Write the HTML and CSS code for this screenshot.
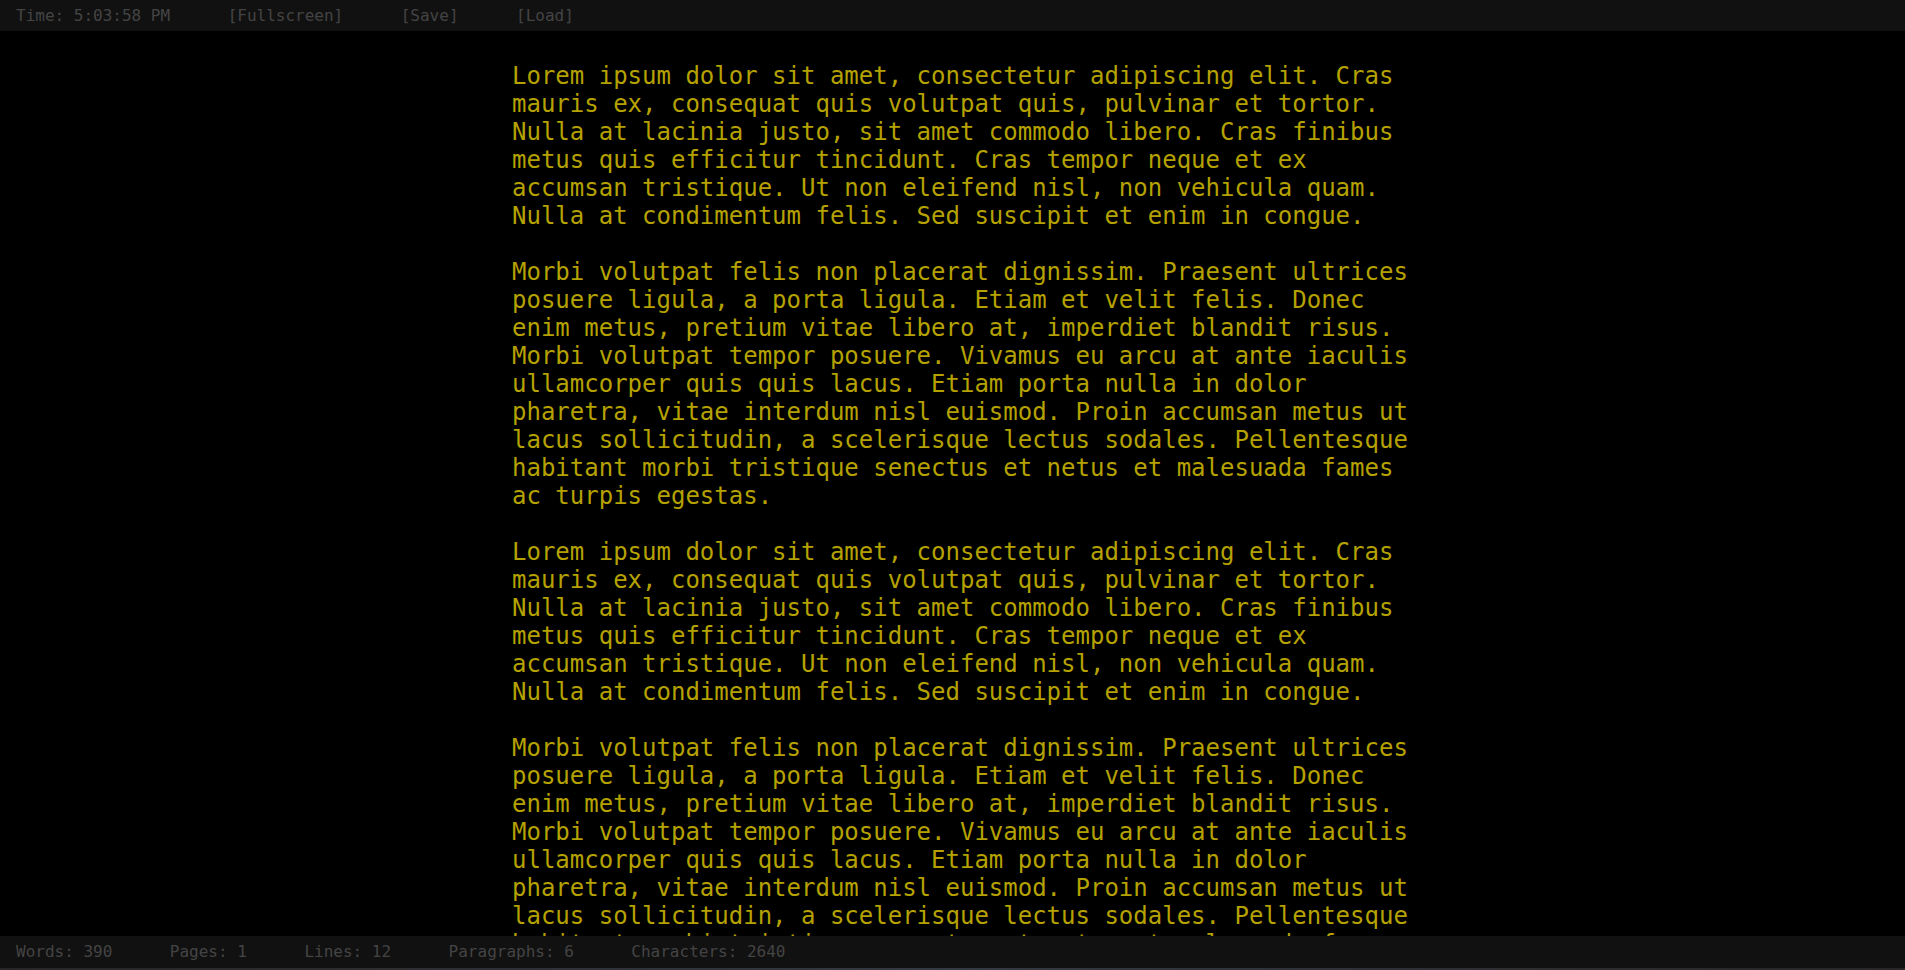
FILE: index.html
```html
<!DOCTYPE html>
<html>
<head>
<meta charset="utf-8">
<link rel="stylesheet" href="styles.css">
</head>
<body>
<div class="app">
  <header class="bar top">
    <span class="item">Time: 5:03:58 PM</span>
    <span class="item">[Fullscreen]</span>
    <span class="item">[Save]</span>
    <span class="item">[Load]</span>
  </header>
  <main class="editor">
    <div class="page">
      <p>Lorem ipsum dolor sit amet, consectetur adipiscing elit. Cras mauris ex, consequat quis volutpat quis, pulvinar et tortor. Nulla at lacinia justo, sit amet commodo libero. Cras finibus metus quis efficitur tincidunt. Cras tempor neque et ex accumsan tristique. Ut non eleifend nisl, non vehicula quam. Nulla at condimentum felis. Sed suscipit et enim in congue.</p>
      <p>Morbi volutpat felis non placerat dignissim. Praesent ultrices posuere ligula, a porta ligula. Etiam et velit felis. Donec enim metus, pretium vitae libero at, imperdiet blandit risus. Morbi volutpat tempor posuere. Vivamus eu arcu at ante iaculis ullamcorper quis quis lacus. Etiam porta nulla in dolor pharetra, vitae interdum nisl euismod. Proin accumsan metus ut lacus sollicitudin, a scelerisque lectus sodales. Pellentesque habitant morbi tristique senectus et netus et malesuada fames ac turpis egestas.</p>
      <p>Lorem ipsum dolor sit amet, consectetur adipiscing elit. Cras mauris ex, consequat quis volutpat quis, pulvinar et tortor. Nulla at lacinia justo, sit amet commodo libero. Cras finibus metus quis efficitur tincidunt. Cras tempor neque et ex accumsan tristique. Ut non eleifend nisl, non vehicula quam. Nulla at condimentum felis. Sed suscipit et enim in congue.</p>
      <p>Morbi volutpat felis non placerat dignissim. Praesent ultrices posuere ligula, a porta ligula. Etiam et velit felis. Donec enim metus, pretium vitae libero at, imperdiet blandit risus. Morbi volutpat tempor posuere. Vivamus eu arcu at ante iaculis ullamcorper quis quis lacus. Etiam porta nulla in dolor pharetra, vitae interdum nisl euismod. Proin accumsan metus ut lacus sollicitudin, a scelerisque lectus sodales. Pellentesque habitant morbi tristique senectus et netus et malesuada fames ac turpis egestas.</p>
    </div>
  </main>
  <footer class="bar bottom">
    <span class="item">Words: 390</span>
    <span class="item">Pages: 1</span>
    <span class="item">Lines: 12</span>
    <span class="item">Paragraphs: 6</span>
    <span class="item">Characters: 2640</span>
  </footer>
  <div class="edge"></div>
</div>
</body>
</html>
```
FILE: styles.css
```css
html, body {
  margin: 0;
  padding: 0;
  height: 100%;
  background: #000;
  overflow: hidden;
}

.app {
  display: flex;
  flex-direction: column;
  height: 100vh;
  font-family: "DejaVu Sans Mono", monospace;
}

.bar {
  display: flex;
  gap: 57.5px;
  background: #111111;
  color: #444444;
  font-size: 16px;
  line-height: 19px;
  padding: 6px 16px;
  flex: none;
}

.bar.bottom {
  padding-bottom: 7px;
}

.item {
  white-space: pre;
}

.editor {
  flex: 1;
  overflow: hidden;
  min-height: 0;
}

.page {
  box-sizing: border-box;
  width: 919px;
  margin: 0 auto;
  padding: 31px 0 0 19px;
  color: #b5a200;
  font-size: 24px;
  line-height: 28px;
}

.page p {
  margin: 0 0 28px 0;
}

.edge {
  flex: none;
  height: 2px;
  background: linear-gradient(to right, #262626, #343a44 50%, #262626);
}
```
